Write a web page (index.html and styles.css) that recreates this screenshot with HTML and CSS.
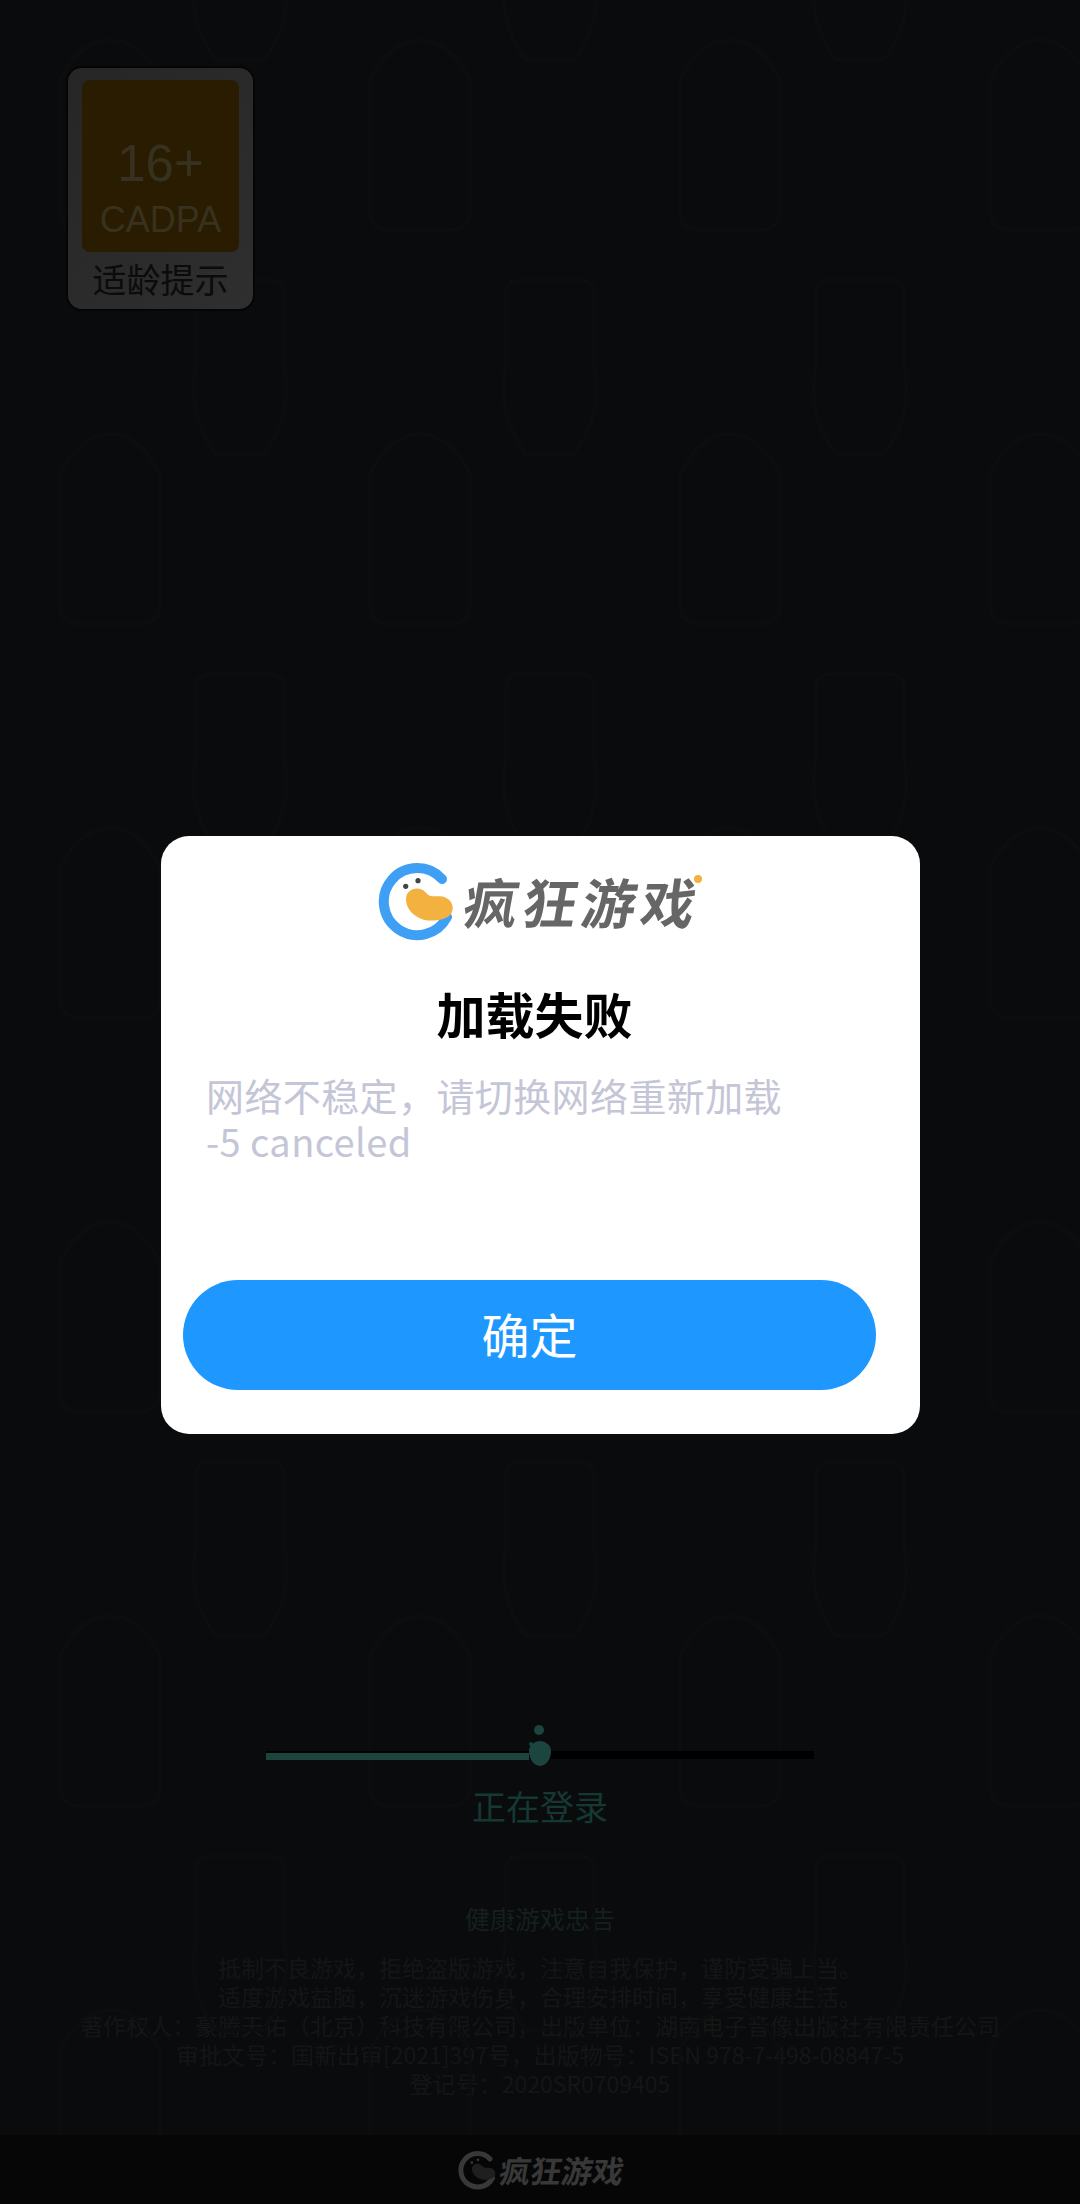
FILE: index.html

```html
<!DOCTYPE html>
<html lang="zh-CN">
<head>
  <meta charset="UTF-8">
  <meta name="viewport" content="width=device-width, initial-scale=1.0">
  <title>疯狂游戏</title>
  <link rel="stylesheet" href="styles.css">
</head>
<body>
  <div class="screen">
    <!-- faint bottle shapes of the launch artwork -->
    <svg class="bg-art" width="1080" height="2135" aria-hidden="true">
      <defs>
        <pattern id="bottles" width="310" height="394" patternUnits="userSpaceOnUse" patternTransform="translate(30 0)">
          <path class="bottle" d="M180 280h60q14 0 14 14v70q10 50-20 90h-48q-30-40-20-90v-70q0-14 14-14z"/>
          <path class="bottle" d="M180 -114h60q14 0 14 14v70q10 50-20 90h-48q-30-40-20-90v-70q0-14 14-14z"/>
          <path class="bottle" d="M30 80q20-40 50-40t50 40v130q0 20-20 20h-60q-20 0-20-20z"/>
        </pattern>
      </defs>
      <rect width="1080" height="2135" fill="url(#bottles)"/>
    </svg>

    <svg class="defs" width="0" height="0" aria-hidden="true">
      <symbol id="duck" viewBox="0 0 80 80">
        <path class="duck-ring" d="M66 18A33.5 33.5 0 1 0 71 56" fill="none" stroke-width="10" stroke-linecap="round"/>
        <path class="duck-beak" d="M30 38C30 31 36 27 42 27.5C49 28 50 34 55 35C61 36 67 34 72 38C77 42 78 48 75 53C70 59 60 60 52 59.5C41 58 30 50 30 38Z"/>
        <circle class="duck-eye" cx="29.7" cy="25.3" r="2.6"/>
        <circle class="duck-eye" cx="42" cy="19.7" r="2.6"/>
      </symbol>
    </svg>

    <div class="age-badge">
      <div class="age-badge-top">
        <span class="age-num">16+</span>
        <span class="age-org">CADPA</span>
      </div>
      <div class="age-label">适龄提示</div>
    </div>

    <div class="loading">
      <div class="progress">
        <div class="progress-fill" style="width:48%"></div>
        <span class="drop-big"></span>
        <span class="drop-small"></span>
        <span class="drop-tiny"></span>
      </div>
      <div class="loading-text">正在登录</div>
    </div>

    <div class="notice">
      <h4>健康游戏忠告</h4>
      <p>抵制不良游戏&#xFF0C;拒绝盗版游戏&#xFF0C;注意自我保护&#xFF0C;谨防受骗上当。</p>
      <p>适度游戏益脑&#xFF0C;沉迷游戏伤身&#xFF0C;合理安排时间&#xFF0C;享受健康生活。</p>
      <p>著作权人&#xFF1A;豪腾天佑&#xFF08;北京&#xFF09;科技有限公司&#xFF0C;出版单位&#xFF1A;湖南电子音像出版社有限责任公司</p>
      <p>审批文号&#xFF1A;国新出审[2021]397号&#xFF0C;出版物号&#xFF1A;ISBN 978-7-498-08847-5</p>
      <p>登记号&#xFF1A;2020SR0709405</p>
    </div>

    <div class="footer">
      <svg class="footer-mark" width="40" height="40"><use href="#duck"/></svg>
      <span class="footer-name">疯狂游戏</span>
    </div>

    <div class="dialog">
      <div class="dialog-logo">
        <svg class="dialog-mark" width="80" height="80"><use href="#duck"/></svg>
        <span class="dialog-name">疯狂游戏</span>
        <span class="logo-dot"></span>
      </div>
      <h3 class="dialog-title">加载失败</h3>
      <p class="dialog-msg">网络不稳定&#xFF0C;请切换网络重新加载<br>-5 canceled</p>
      <button class="dialog-btn">确定</button>
    </div>
  </div>
</body>
</html>
```

FILE: styles.css

```css
body {
  margin: 0;
  background: #0a0b0c;
  font-family: "Noto Sans CJK SC", "Noto Sans", sans-serif;
}
.screen {
  position: relative;
  width: 1080px;
  height: 2204px;
  background: #0a0b0c;
  display: flex;
  flex-direction: column;
  overflow: hidden;
}
.bg-art {
  position: absolute;
  left: 0;
  top: 0;
}
.bottle {
  fill: none;
  stroke: #0b0d0e;
  stroke-width: 3;
}
.defs {
  position: absolute;
}

.age-badge {
  position: relative;
  width: 185px;
  height: 241px;
  margin: 68px 0 0 68px;
  padding: 12px 14px 0;
  box-sizing: border-box;
  background: linear-gradient(135deg, #262626, #2f2f2f);
  border-radius: 14px;
  box-shadow: 0 0 0 2px #050505;
}
.age-badge-top {
  height: 172px;
  background: #291c00;
  border-radius: 8px;
  display: flex;
  flex-direction: column;
  align-items: center;
  font-family: "Liberation Sans", sans-serif;
  color: #37321f;
}
.age-num {
  font-size: 51px;
  line-height: 58px;
  margin-top: 55px;
}
.age-org {
  font-size: 36px;
  line-height: 40px;
  margin-top: 7px;
}
.age-label {
  text-align: center;
  font-size: 34px;
  line-height: 40px;
  margin-top: 7px;
  color: #0b0b0b;
}

.loading {
  position: relative;
  margin-top: auto;
  display: flex;
  flex-direction: column;
  align-items: center;
}
.progress {
  position: relative;
  width: 548px;
  height: 8px;
  background: #000;
}
.progress-fill {
  position: absolute;
  left: 0;
  top: 2px;
  height: 7px;
  background: #1c4540;
}
.drop-big {
  position: absolute;
  left: 263px;
  top: -10px;
  width: 22px;
  height: 25px;
  border-radius: 50% 50% 50% 50% / 40% 40% 60% 60%;
  background: #1c4540;
}
.drop-small {
  position: absolute;
  left: 268px;
  top: -26px;
  width: 10px;
  height: 10px;
  border-radius: 50%;
  background: #1c4540;
}
.drop-tiny {
  position: absolute;
  left: 263px;
  top: -9px;
  width: 4px;
  height: 4px;
  border-radius: 50%;
  background: #1c4540;
}
.loading-text {
  margin-top: 27px;
  font-size: 34px;
  line-height: 40px;
  color: #153833;
}

.notice {
  margin-top: 77px;
  margin-bottom: 37px;
  text-align: center;
  color: #141616;
  font-size: 23px;
  line-height: 29px;
}
.notice h4 {
  margin: 0 0 20px;
  font-size: 25px;
  line-height: 30px;
  font-weight: 400;
  color: #14201e;
}
.notice p {
  margin: 0;
}

.footer {
  position: relative;
  height: 69px;
  background: #060606;
  display: flex;
  align-items: center;
  justify-content: center;
  gap: 3px;
  color: #383838;
  --ring: #383838;
  --beak: #1f1f1f;
  --eye: #383838;
}
.footer-name {
  font-size: 31px;
  line-height: 40px;
  font-weight: 700;
  transform: skewX(-10deg);
}

.dialog {
  position: absolute;
  left: 161px;
  top: 836px;
  width: 759px;
  height: 598px;
  background: #fff;
  border-radius: 28px;
  box-sizing: border-box;
  --ring: #3f9ff5;
  --beak: #f3b13f;
  --eye: #444;
}
.duck-ring {
  stroke: var(--ring);
}
.duck-beak {
  fill: var(--beak);
}
.duck-eye {
  fill: var(--eye);
}
.dialog-logo {
  position: relative;
  display: flex;
  align-items: center;
  height: 80px;
  margin: 25px 0 0 215px;
}
.dialog-name {
  margin-left: 9px;
  font-size: 54px;
  line-height: 80px;
  letter-spacing: 5px;
  font-weight: 700;
  color: #666;
  transform: skewX(-10deg);
}
.logo-dot {
  position: absolute;
  left: 318px;
  top: 14px;
  width: 8px;
  height: 8px;
  border-radius: 50%;
  background: #f3b13f;
}
.dialog-title {
  margin: 41px 0 0 -12px;
  text-align: center;
  font-size: 49px;
  line-height: 62px;
  font-weight: 700;
  color: #000;
}
.dialog-msg {
  margin: 28px 0 0 45px;
  font-size: 38px;
  line-height: 46px;
  letter-spacing: 0.4px;
  color: #c4c5d6;
}
.dialog-btn {
  position: absolute;
  left: 22px;
  top: 444px;
  width: 693px;
  height: 110px;
  padding: 0 0 4px;
  border: none;
  border-radius: 55px;
  background: #1e98ff;
  color: #fff;
  font-family: inherit;
  font-size: 48px;
}
```
